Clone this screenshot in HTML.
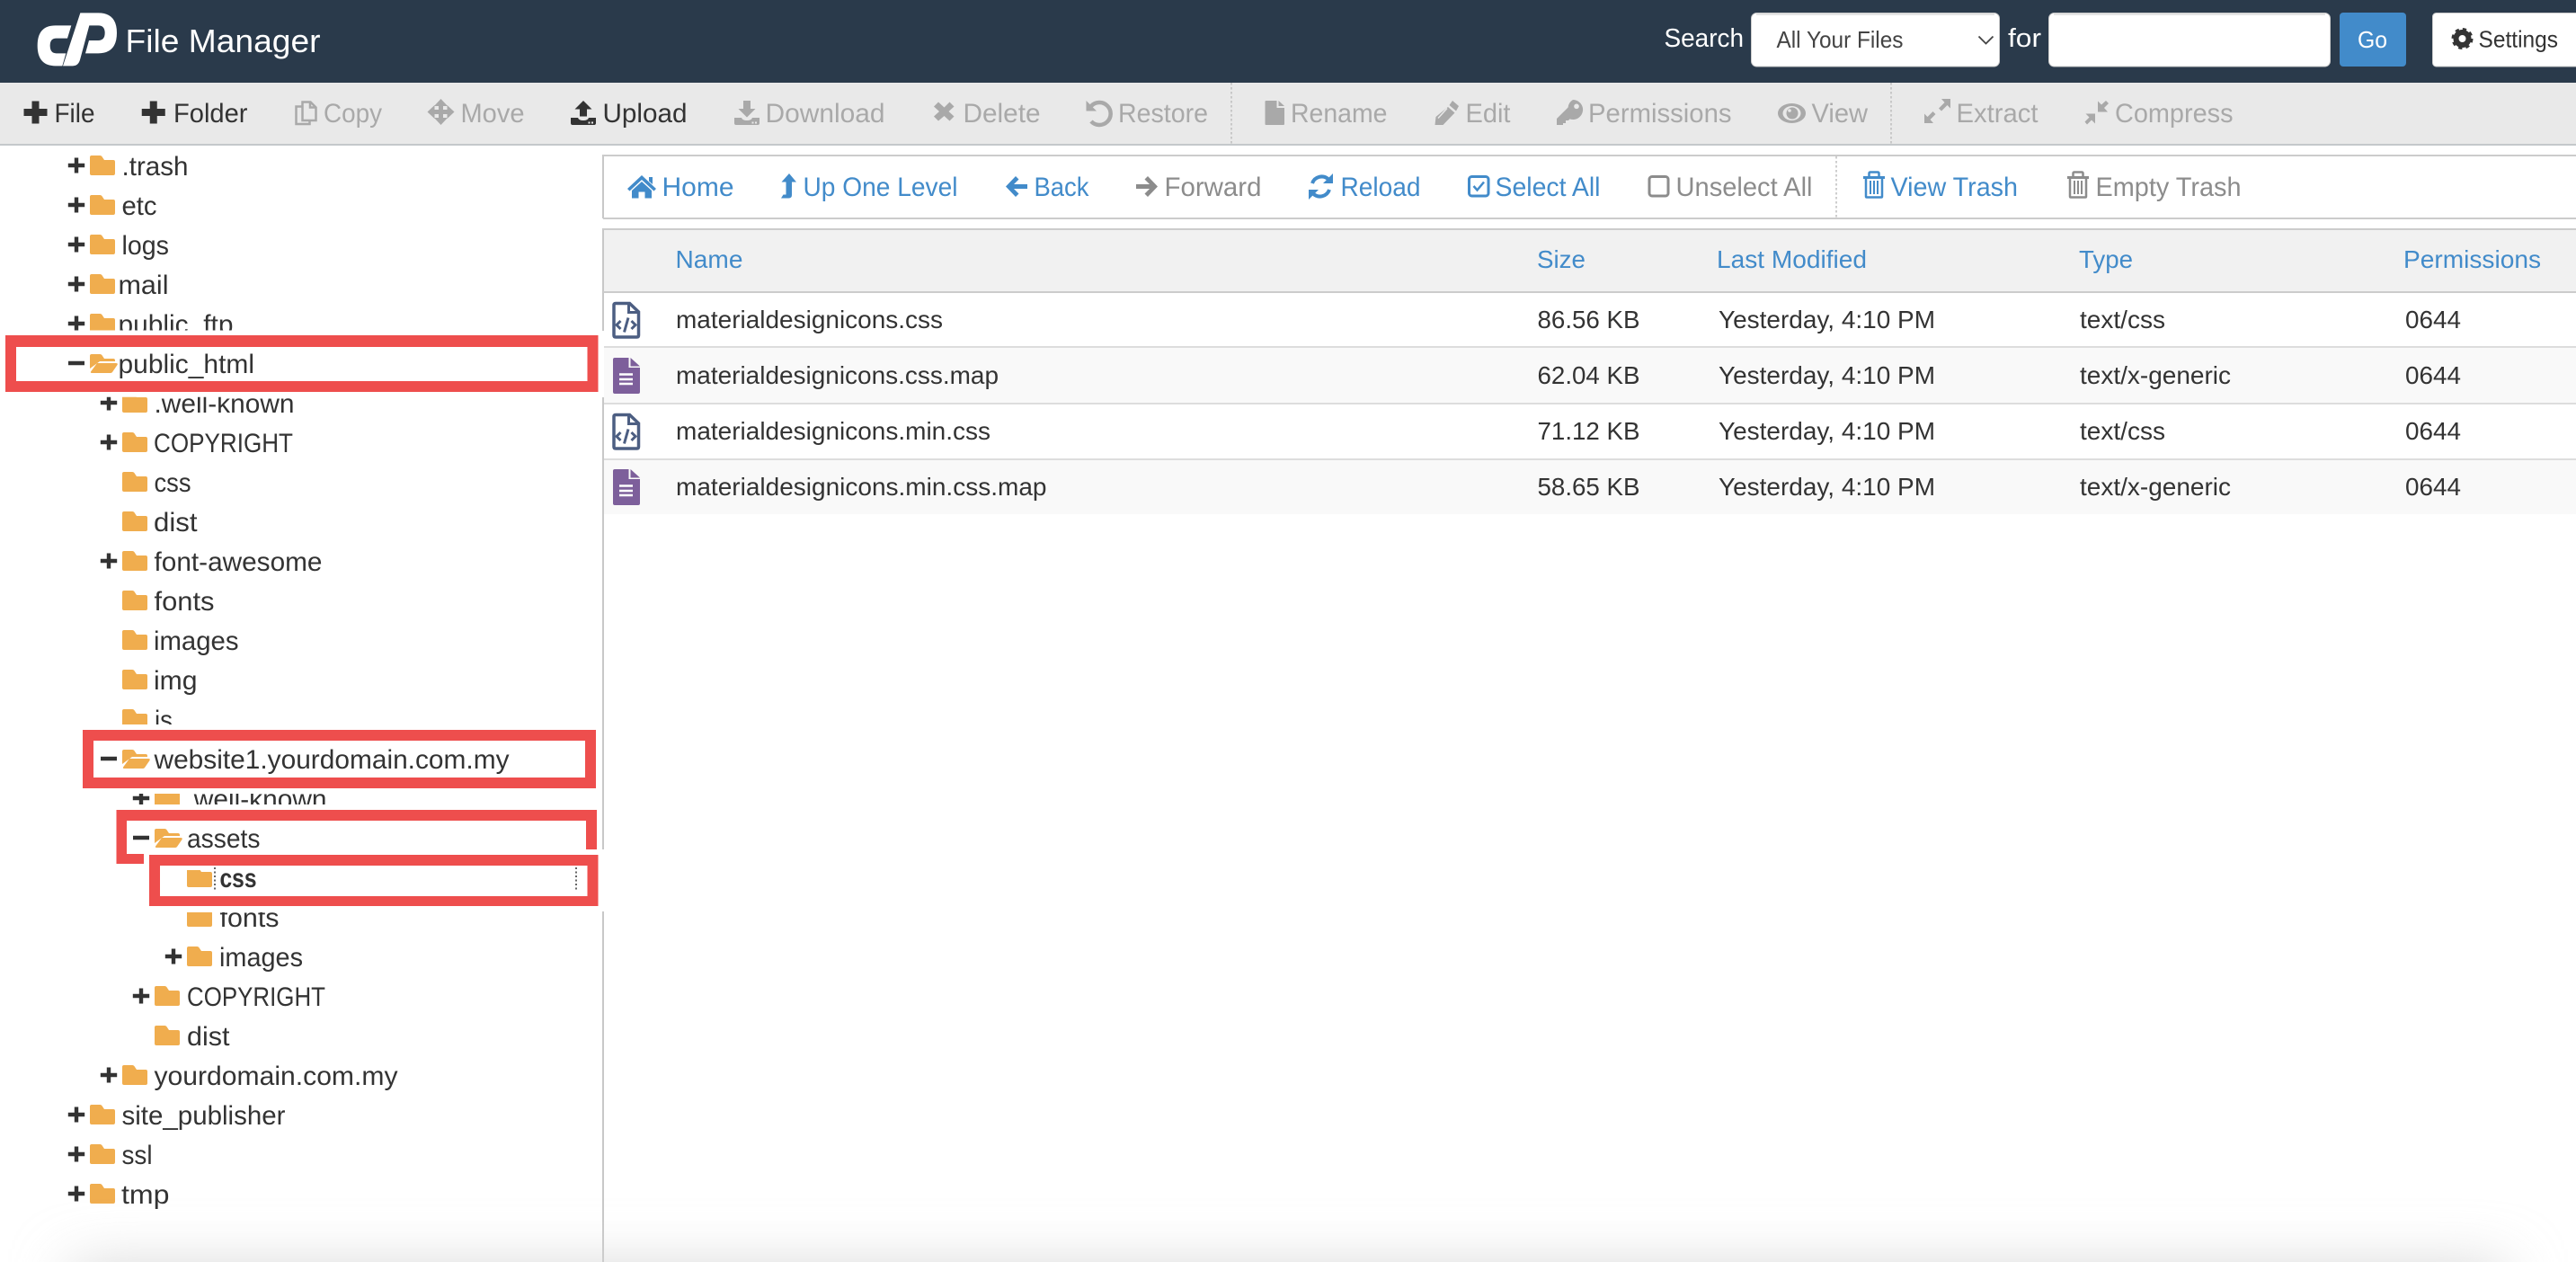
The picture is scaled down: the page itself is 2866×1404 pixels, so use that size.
<!DOCTYPE html>
<html lang="en">
<head>
<meta charset="utf-8">
<title>File Manager</title>
<style>
html,body{margin:0;padding:0;background:#fff;width:2866px;height:1404px;overflow:hidden}
svg{display:block}
text{font-family:"Liberation Sans",sans-serif;white-space:pre}
.tr{font-size:30px;fill:#333}
.tb{font-size:30px;fill:#333}
.dis{fill:#a9a9a9}
.ic{fill:#333}
.icd{fill:#a9a9a9}
.sb{font-size:30px;fill:#428bca}
.sg{fill:#8c8c8c}
.th{font-size:28px;fill:#428bca}
.td{font-size:28px;fill:#333}
.box{fill:#ee4e4d}
</style>
</head>
<body>
<svg width="2866" height="1404" viewBox="0 0 2866 1404" xmlns="http://www.w3.org/2000/svg">
<defs>
<path id="fo" fill="#f0ad4e" d="M0 2q0-2 2-2h9q2 0 3 2l2 3h10q2 0 2 2v13q0 2-2 2H2q-2 0-2-2z"/>
<g id="fopen" fill="#f0ad4e"><path d="M0 3q0-2 2-2h9q2 0 3 2l2 3h10q2 0 2 2v1H11L0 17z"/><path d="M2 22q-1.500 0-1-1.500L8 11h21q2.500 0 1.500 2L25 21q-.7 1-2 1z"/></g>
<path id="pl" fill="#333" d="M-2.200-8.500h4.400v6.300h7v4.400h-7v6.300h-4.400v-6.300h-7v-4.400h7z"/>
<path id="mi" fill="#333" d="M-9-2.200h18v4.400h-18z"/>
<path id="tbp" fill="#333" d="M-4-12.500h8v8.500h9v8h-9v8.500h-8V4h-9v-8h9z"/>
<g id="fc"><path d="M3.500 1.500h15.500l10 9.500v26q0 2-2 2H3.500q-2 0-2-2V3.500q0-2 2-2z" fill="#fff" stroke="#4c5e82" stroke-width="3.500"/><path d="M18 1.500V11.500h11" fill="none" stroke="#4c5e82" stroke-width="3"/><path d="M9 21l-4.500 4.500L9 30M21 21l4.500 4.500L21 30M17.500 17.500l-4.500 16" fill="none" stroke="#4c5e82" stroke-width="3"/></g>
<g id="fm"><path d="M2.500 0h15.500v11h12.500v27q0 2-2 2H2.500q-2 0-2-2V2q0-2 2-2z" fill="#7d5f9b"/><path d="M20 0l10.500 9.500H20z" fill="#7d5f9b"/><path d="M7.500 18.500h15M7.500 24h15M7.500 29h15" stroke="#fff" stroke-width="2.500" fill="none"/></g>
<g id="tray"><path d="M0 0h8q1 3 6 3t6-3h8v6q0 2-2 2H2q-2 0-2-2z"/></g>
<clipPath id="c1"><rect x="0" y="162" width="670" height="205.500"/></clipPath>
<clipPath id="c2"><rect x="0" y="441.700" width="670" height="30"/></clipPath>
<clipPath id="c3"><rect x="0" y="780" width="670" height="26"/></clipPath>
<clipPath id="c4"><rect x="0" y="883" width="670" height="12"/></clipPath>
<clipPath id="c5"><rect x="0" y="968" width="670" height="29"/></clipPath>
<clipPath id="c6"><rect x="0" y="1015" width="670" height="30"/></clipPath>
<filter id="blur" filterUnits="userSpaceOnUse" x="0" y="1204" width="2866" height="300"><feGaussianBlur stdDeviation="32"/></filter>
</defs>

<rect width="2866" height="1404" fill="#fff"/>

<!-- Header -->
<rect width="2866" height="92" fill="#2a3a4b"/>
<g transform="translate(20 0) scale(.3333)" fill="#fff">
<path d="M178 85L165 128H128Q107 128 107 152Q107 178 128 178H160L148 220H125Q65 220 65 152Q65 85 125 85Z"/>
<path d="M208 43H268Q330 43 330 110Q330 178 268 178H225L237 135H268Q290 135 290 110Q290 85 268 85H238L207 200Q201 220 183 220H150Z"/>
</g>
<text x="139.500" y="58" font-size="36" fill="#fff" textLength="217" lengthAdjust="spacingAndGlyphs">File Manager</text>
<text x="1851.500" y="52" font-size="29" fill="#fff" textLength="88.500" lengthAdjust="spacingAndGlyphs">Search</text>
<rect x="1948.500" y="14.500" width="276" height="59.500" rx="6" fill="#fff" stroke="#ccc"/>
<path d="M1954 16H2219" stroke="#e4e4e4" stroke-width="2"/>
<text x="1976.500" y="53" font-size="26" fill="#444" textLength="141" lengthAdjust="spacingAndGlyphs">All Your Files</text>
<path d="M2201.500 40.500l8 8 8-8" fill="none" stroke="#444" stroke-width="1.800"/>
<text x="2234" y="52" font-size="29" fill="#fff" textLength="37" lengthAdjust="spacingAndGlyphs">for</text>
<rect x="2279.500" y="14.500" width="313" height="59.500" rx="6" fill="#fff" stroke="#ccc"/>
<path d="M2285 16H2587" stroke="#e4e4e4" stroke-width="2"/>
<rect x="2603" y="14" width="74" height="60" rx="4" fill="#428bca"/>
<text x="2623" y="53" font-size="26" fill="#fff" textLength="33" lengthAdjust="spacingAndGlyphs">Go</text>
<rect x="2706.500" y="14.500" width="170" height="59.500" rx="4" fill="#fff" stroke="#ccc"/>
<circle cx="2739.500" cy="43" r="7" fill="none" stroke="#333" stroke-width="6"/>
<circle cx="2739.500" cy="43" r="10.500" fill="none" stroke="#333" stroke-width="3" stroke-dasharray="4.200 4.050"/>
<text x="2757.500" y="52.500" font-size="26" fill="#333" textLength="88.500" lengthAdjust="spacingAndGlyphs">Settings</text>

<!-- Main toolbar -->
<rect y="92" width="2866" height="68" fill="#e9e9e9"/>
<rect y="160" width="2866" height="2" fill="#c4c8cb"/>
<path d="M1370 92V160M2104 92V160" stroke="#bdbdbd" stroke-width="1.500" stroke-dasharray="2.500 2.500" fill="none"/>

<use href="#tbp" x="39.500" y="125"/>
<text class="tb" x="60.500" y="136" textLength="45" lengthAdjust="spacingAndGlyphs">File</text>
<use href="#tbp" x="170.750" y="125"/>
<text class="tb" x="193" y="136" textLength="82.500" lengthAdjust="spacingAndGlyphs">Folder</text>

<g fill="none" stroke="#a9a9a9" stroke-width="2.500"><path d="M336.500 113.500h9l6 6v14.500h-15zM345 113.500v6h6"/><path d="M336 118.500h-6.500v19.500h15v-4"/></g>
<text class="tb dis" x="360" y="136" textLength="65" lengthAdjust="spacingAndGlyphs">Copy</text>

<path class="icd" d="M490.500 110l7.500 8h-5v4h4.500v-5l8 7.500-8 7.500v-5H493v4h5l-7.500 8-7.500-8h5v-4h-4.500v5l-8-7.500 8-7.500v5h4.500v-4h-5z"/>
<text class="tb dis" x="512.500" y="136" textLength="71" lengthAdjust="spacingAndGlyphs">Move</text>

<path class="ic" d="M649 112l9.500 9.500H653v8h-8v-8h-5.500z"/>
<use href="#tray" x="635" y="131" class="ic"/>
<path d="M654.500 136.500h2M658 136.500h2" stroke="#e9e9e9" stroke-width="2"/>
<text class="tb" x="670.500" y="136" textLength="94" lengthAdjust="spacingAndGlyphs">Upload</text>

<path class="icd" d="M827 112h8v9h5.500l-9.500 9.500-9.500-9.500h5.500z"/>
<use href="#tray" x="817" y="131" class="icd"/>
<path d="M836.500 136.500h2M840 136.500h2" stroke="#e9e9e9" stroke-width="2"/>
<text class="tb dis" x="851.500" y="136" textLength="133" lengthAdjust="spacingAndGlyphs">Download</text>

<path class="icd" d="M1044 113.500l6.500 6 6-6 5 5-6 5.500 6 5.500-5 5-6-5.500-6.500 5.500-5-5 6-5.500-6-5.500z"/>
<text class="tb dis" x="1071.500" y="136" textLength="86" lengthAdjust="spacingAndGlyphs">Delete</text>

<path d="M1214 118A12.500 12.500 0 1 1 1214 135" fill="none" stroke="#a9a9a9" stroke-width="4.500"/>
<path class="icd" d="M1208.500 112l11.500 11.500h-11.500z"/>
<text class="tb dis" x="1244" y="136" textLength="100" lengthAdjust="spacingAndGlyphs">Restore</text>

<path class="icd" d="M1407.500 113q0-1 1-1h12v8h8.500v18q0 1-1 1h-19.500q-1 0-1-1z"/><path class="icd" d="M1422.500 112l6.500 6h-6.500z"/>
<text class="tb dis" x="1436" y="136" textLength="107.500" lengthAdjust="spacingAndGlyphs">Rename</text>

<path class="icd" d="M1616 112l7 6-3 5.500-7.500-6.500zM1611 119l7.500 6.500-13 13.500-9 0 1-9z"/><path d="M1600 131.500l10-11" stroke="#e9e9e9" stroke-width="1.500"/>
<text class="tb dis" x="1630.500" y="136" textLength="50" lengthAdjust="spacingAndGlyphs">Edit</text>

<path class="icd" fill-rule="evenodd" d="M1750 111a11 11 0 1 1-3.500 21.400L1745 134h-3v3h-3v2h-7v-7l12.600-12.500A11 11 0 0 1 1750 111zm4 4.500a2.800 2.800 0 1 0 .01 0z"/>
<text class="tb dis" x="1767" y="136" textLength="159.500" lengthAdjust="spacingAndGlyphs">Permissions</text>

<ellipse class="icd" cx="1993.500" cy="126" rx="15.500" ry="11"/><ellipse cx="1993.500" cy="126" rx="10" ry="8" fill="#e9e9e9"/><circle class="icd" cx="1994" cy="126" r="6.500"/><circle cx="1991" cy="123" r="1.800" fill="#e9e9e9"/>
<text class="tb dis" x="2015.500" y="136" textLength="62.500" lengthAdjust="spacingAndGlyphs">View</text>

<path class="icd" d="M2160 110h10v10.500l-3.500-3.500-6.500 6.500-3-3 6.500-6.500zM2141 137v-10.500l3.500 3.500 6-6 3 3-6 6 3.500 4z"/>
<text class="tb dis" x="2176.500" y="136" textLength="91" lengthAdjust="spacingAndGlyphs">Extract</text>

<path class="icd" d="M2334 124.500v-12l4 4 5-4.500 3 3-5 5 4 4.500zM2331 126.500v11l-4-4-5 5-2.500-3 5-5-4-4z"/>
<text class="tb dis" x="2353" y="136" textLength="131.500" lengthAdjust="spacingAndGlyphs">Compress</text>

<!-- Tree -->
<g id="tree">
<use href="#pl" x="85" y="184"/><use href="#fo" x="100" y="173"/><text class="tr" x="135.500" y="195" textLength="74" lengthAdjust="spacingAndGlyphs">.trash</text>
<use href="#pl" x="85" y="228"/><use href="#fo" x="100" y="217"/><text class="tr" x="135.500" y="239" textLength="39" lengthAdjust="spacingAndGlyphs">etc</text>
<use href="#pl" x="85" y="272"/><use href="#fo" x="100" y="261"/><text class="tr" x="135.500" y="283" textLength="52.500" lengthAdjust="spacingAndGlyphs">logs</text>
<use href="#pl" x="85" y="316"/><use href="#fo" x="100" y="305"/><text class="tr" x="131.500" y="327" textLength="56" lengthAdjust="spacingAndGlyphs">mail</text>
<g clip-path="url(#c1)"><use href="#pl" x="85" y="360"/><use href="#fo" x="100" y="349"/><text class="tr" x="131.500" y="371" textLength="128" lengthAdjust="spacingAndGlyphs">public_ftp</text></g>
<use href="#mi" x="85" y="404"/><use href="#fopen" x="100" y="393"/><text class="tr" x="131.500" y="415" textLength="151.500" lengthAdjust="spacingAndGlyphs">public_html</text>
<g clip-path="url(#c2)"><use href="#pl" x="121" y="448"/><use href="#fo" x="136" y="437"/><text class="tr" x="171.500" y="459" textLength="156" lengthAdjust="spacingAndGlyphs">.well-known</text></g>
<use href="#pl" x="121" y="492"/><use href="#fo" x="136" y="481"/><text class="tr" x="171" y="503" textLength="155" lengthAdjust="spacingAndGlyphs">COPYRIGHT</text>
<use href="#fo" x="136" y="525"/><text class="tr" x="171.500" y="547" textLength="41" lengthAdjust="spacingAndGlyphs">css</text>
<use href="#fo" x="136" y="569"/><text class="tr" x="171" y="591" textLength="48.500" lengthAdjust="spacingAndGlyphs">dist</text>
<use href="#pl" x="121" y="624"/><use href="#fo" x="136" y="613"/><text class="tr" x="171.500" y="635" textLength="187" lengthAdjust="spacingAndGlyphs">font-awesome</text>
<use href="#fo" x="136" y="657"/><text class="tr" x="171.500" y="679" textLength="67" lengthAdjust="spacingAndGlyphs">fonts</text>
<use href="#fo" x="136" y="701"/><text class="tr" x="171" y="723" textLength="94.500" lengthAdjust="spacingAndGlyphs">images</text>
<use href="#fo" x="136" y="745"/><text class="tr" x="171" y="767" textLength="48.500" lengthAdjust="spacingAndGlyphs">img</text>
<g clip-path="url(#c3)"><use href="#fo" x="136" y="789"/><text class="tr" x="172" y="811" textLength="20" lengthAdjust="spacingAndGlyphs">js</text></g>
<use href="#mi" x="121" y="844"/><use href="#fopen" x="136" y="833"/><text class="tr" x="171.500" y="855" textLength="395" lengthAdjust="spacingAndGlyphs">website1.yourdomain.com.my</text>
<g clip-path="url(#c4)"><use href="#pl" x="157" y="888"/><use href="#fo" x="172" y="877"/><text class="tr" x="207.500" y="899" textLength="156" lengthAdjust="spacingAndGlyphs">.well-known</text></g>
<use href="#mi" x="157" y="932"/><use href="#fopen" x="172" y="921"/><text class="tr" x="208" y="943" textLength="81.500" lengthAdjust="spacingAndGlyphs">assets</text>
<g clip-path="url(#c5)"><use href="#fo" x="208" y="965"/></g><text class="tr" x="244.500" y="987" font-weight="bold" textLength="41" lengthAdjust="spacingAndGlyphs">css</text>
<path d="M239 965V991M641 965V991" stroke="#333" stroke-width="1.500" stroke-dasharray="2 2.500" fill="none"/>
<g clip-path="url(#c6)"><use href="#fo" x="208" y="1009"/><text class="tr" x="244.500" y="1031" textLength="66" lengthAdjust="spacingAndGlyphs">fonts</text></g>
<use href="#pl" x="193" y="1064"/><use href="#fo" x="208" y="1053"/><text class="tr" x="244" y="1075" textLength="93" lengthAdjust="spacingAndGlyphs">images</text>
<use href="#pl" x="157" y="1108"/><use href="#fo" x="172" y="1097"/><text class="tr" x="208" y="1119" textLength="154" lengthAdjust="spacingAndGlyphs">COPYRIGHT</text>
<use href="#fo" x="172" y="1141"/><text class="tr" x="208" y="1163" textLength="47.500" lengthAdjust="spacingAndGlyphs">dist</text>
<use href="#pl" x="121" y="1196"/><use href="#fo" x="136" y="1185"/><text class="tr" x="171.500" y="1207" textLength="271" lengthAdjust="spacingAndGlyphs">yourdomain.com.my</text>
<use href="#pl" x="85" y="1240"/><use href="#fo" x="100" y="1229"/><text class="tr" x="135.500" y="1251" textLength="182" lengthAdjust="spacingAndGlyphs">site_publisher</text>
<use href="#pl" x="85" y="1284"/><use href="#fo" x="100" y="1273"/><text class="tr" x="135.500" y="1295" textLength="34" lengthAdjust="spacingAndGlyphs">ssl</text>
<use href="#pl" x="85" y="1328"/><use href="#fo" x="100" y="1317"/><text class="tr" x="135" y="1339" textLength="53.500" lengthAdjust="spacingAndGlyphs">tmp</text>
</g>

<!-- Red highlight boxes -->
<path class="box" fill-rule="evenodd" d="M6 373H665.500V436H6ZM18 386V424H653.500V386Z"/>
<path class="box" fill-rule="evenodd" d="M92 812H663V877H92ZM104 824V865H651V824Z"/>
<path class="box" d="M129.500 901H664V945H652V913H141V950H160V961H129.500Z"/>
<path class="box" fill-rule="evenodd" d="M166 951H665.500V1008H166ZM178 963V997H653.500V963Z"/>

<!-- Divider -->
<path d="M671 172V243M671 254V368M671 442V945M671 1014V1404" stroke="#c8c8c8" stroke-width="2" fill="none"/>

<!-- Secondary toolbar -->
<path d="M671 173H2866M671 243H2866" stroke="#ccc" stroke-width="2" fill="none"/>
<path d="M2043 174V242" stroke="#bdbdbd" stroke-width="1.500" stroke-dasharray="2.500 2.500" fill="none"/>

<path fill="#428bca" d="M714 195l16 15-2.500 2.500L714 200l-13.500 12.500L698 210zM722 197h4v8l-4-3.500zM703 212l11-10 11 10v8.500h-7.500v-7h-7v7H703z"/>
<text class="sb" x="736.500" y="218" textLength="80" lengthAdjust="spacingAndGlyphs">Home</text>
<path fill="#428bca" d="M878 193l8 9.500h-5v14.500q0 3.500-3.500 3.500H869l2.500-4h3v-14h-5z"/>
<text class="sb" x="893.500" y="218" textLength="172" lengthAdjust="spacingAndGlyphs">Up One Level</text>
<path fill="#428bca" d="M1119 207.500l11-11.500 3.500 3.500-5.500 5.500h15v5h-15l5.500 5.500-3.500 3.500z"/>
<text class="sb" x="1150.500" y="218" textLength="61" lengthAdjust="spacingAndGlyphs">Back</text>
<path fill="#8c8c8c" d="M1288 207.500l-11-11.500-3.500 3.500 5.500 5.500h-15v5h15l-5.500 5.500 3.500 3.500z"/>
<text class="sb sg" x="1295.500" y="218" textLength="108" lengthAdjust="spacingAndGlyphs">Forward</text>
<path d="M1460 204A11 11 0 0 1 1478 199.500M1479 211A11 11 0 0 1 1461 215.500" fill="none" stroke="#428bca" stroke-width="4"/>
<path fill="#428bca" d="M1483 193v11h-11zM1456 222v-11h11z"/>
<text class="sb" x="1491.500" y="218" textLength="89" lengthAdjust="spacingAndGlyphs">Reload</text>
<rect x="1634.500" y="196.500" width="21.500" height="21.500" rx="3" fill="none" stroke="#428bca" stroke-width="3"/>
<path d="M1639.500 207l4 4.500 7.500-9" fill="none" stroke="#428bca" stroke-width="2.500"/>
<text class="sb" x="1663.500" y="218" textLength="117" lengthAdjust="spacingAndGlyphs">Select All</text>
<rect x="1835" y="196.500" width="21" height="21.500" rx="3" fill="none" stroke="#8c8c8c" stroke-width="3"/>
<text class="sb sg" x="1864.500" y="218" textLength="152" lengthAdjust="spacingAndGlyphs">Unselect All</text>
<g fill="none" stroke="#428bca"><path d="M2073 197.500h24" stroke-width="3"/><path d="M2079.500 196.500v-3.500q0-1.500 1.500-1.500h8q1.500 0 1.500 1.500v3.500" stroke-width="2.500"/><path d="M2076 198v20.500q0 1 1 1h16q1 0 1-1V198" stroke-width="2.500"/><path d="M2081 201v15M2085 201v15M2089 201v15" stroke-width="2"/></g>
<text class="sb" x="2103.500" y="218" textLength="141.500" lengthAdjust="spacingAndGlyphs">View Trash</text>
<g fill="none" stroke="#8c8c8c"><path d="M2300 197.500h24" stroke-width="3"/><path d="M2306.500 196.500v-3.500q0-1.500 1.500-1.500h8q1.500 0 1.500 1.500v3.500" stroke-width="2.500"/><path d="M2303 198v20.500q0 1 1 1h16q1 0 1-1V198" stroke-width="2.500"/><path d="M2308 201v15M2312 201v15M2316 201v15" stroke-width="2"/></g>
<text class="sb sg" x="2331.500" y="218" textLength="162" lengthAdjust="spacingAndGlyphs">Empty Trash</text>

<!-- Table -->
<rect x="672" y="255" width="2194" height="69" fill="#f1f1f1"/>
<path d="M671 255H2866M671 325H2866" stroke="#ccc" stroke-width="2" fill="none"/>
<text class="th" x="751.500" y="298" textLength="75" lengthAdjust="spacingAndGlyphs">Name</text>
<text class="th" x="1710" y="298" textLength="54" lengthAdjust="spacingAndGlyphs">Size</text>
<text class="th" x="1910" y="298" textLength="167" lengthAdjust="spacingAndGlyphs">Last Modified</text>
<text class="th" x="2313" y="298" textLength="60" lengthAdjust="spacingAndGlyphs">Type</text>
<text class="th" x="2674" y="298" textLength="153" lengthAdjust="spacingAndGlyphs">Permissions</text>

<rect x="672" y="387" width="2194" height="61" fill="#f9f9f9"/>
<rect x="672" y="512" width="2194" height="60" fill="#f9f9f9"/>
<path d="M672 386H2866M672 449H2866M672 511H2866" stroke="#ddd" stroke-width="2" fill="none"/>

<use href="#fc" x="681.500" y="336"/>
<text class="td" x="752" y="365" textLength="297" lengthAdjust="spacingAndGlyphs">materialdesignicons.css</text>
<text class="td" x="1710.500" y="365" textLength="114" lengthAdjust="spacingAndGlyphs">86.56 KB</text>
<text class="td" x="1912" y="365" textLength="241" lengthAdjust="spacingAndGlyphs">Yesterday, 4:10 PM</text>
<text class="td" x="2314" y="365" textLength="95" lengthAdjust="spacingAndGlyphs">text/css</text>
<text class="td" x="2676" y="365" textLength="62" lengthAdjust="spacingAndGlyphs">0644</text>

<use href="#fm" x="681.500" y="398"/>
<text class="td" x="752" y="427" textLength="359" lengthAdjust="spacingAndGlyphs">materialdesignicons.css.map</text>
<text class="td" x="1710.500" y="427" textLength="114" lengthAdjust="spacingAndGlyphs">62.04 KB</text>
<text class="td" x="1912" y="427" textLength="241" lengthAdjust="spacingAndGlyphs">Yesterday, 4:10 PM</text>
<text class="td" x="2314" y="427" textLength="168" lengthAdjust="spacingAndGlyphs">text/x-generic</text>
<text class="td" x="2676" y="427" textLength="62" lengthAdjust="spacingAndGlyphs">0644</text>

<use href="#fc" x="681.500" y="460"/>
<text class="td" x="752" y="489" textLength="350" lengthAdjust="spacingAndGlyphs">materialdesignicons.min.css</text>
<text class="td" x="1710.500" y="489" textLength="114" lengthAdjust="spacingAndGlyphs">71.12 KB</text>
<text class="td" x="1912" y="489" textLength="241" lengthAdjust="spacingAndGlyphs">Yesterday, 4:10 PM</text>
<text class="td" x="2314" y="489" textLength="95" lengthAdjust="spacingAndGlyphs">text/css</text>
<text class="td" x="2676" y="489" textLength="62" lengthAdjust="spacingAndGlyphs">0644</text>

<use href="#fm" x="681.500" y="522"/>
<text class="td" x="752" y="551" textLength="412.500" lengthAdjust="spacingAndGlyphs">materialdesignicons.min.css.map</text>
<text class="td" x="1710.500" y="551" textLength="114" lengthAdjust="spacingAndGlyphs">58.65 KB</text>
<text class="td" x="1912" y="551" textLength="241" lengthAdjust="spacingAndGlyphs">Yesterday, 4:10 PM</text>
<text class="td" x="2314" y="551" textLength="168" lengthAdjust="spacingAndGlyphs">text/x-generic</text>
<text class="td" x="2676" y="551" textLength="62" lengthAdjust="spacingAndGlyphs">0644</text>

<!-- Bottom window shade -->
<rect x="80" y="1410" width="2706" height="60" fill="#d4d4d4" filter="url(#blur)"/>
</svg>
</body>
</html>
